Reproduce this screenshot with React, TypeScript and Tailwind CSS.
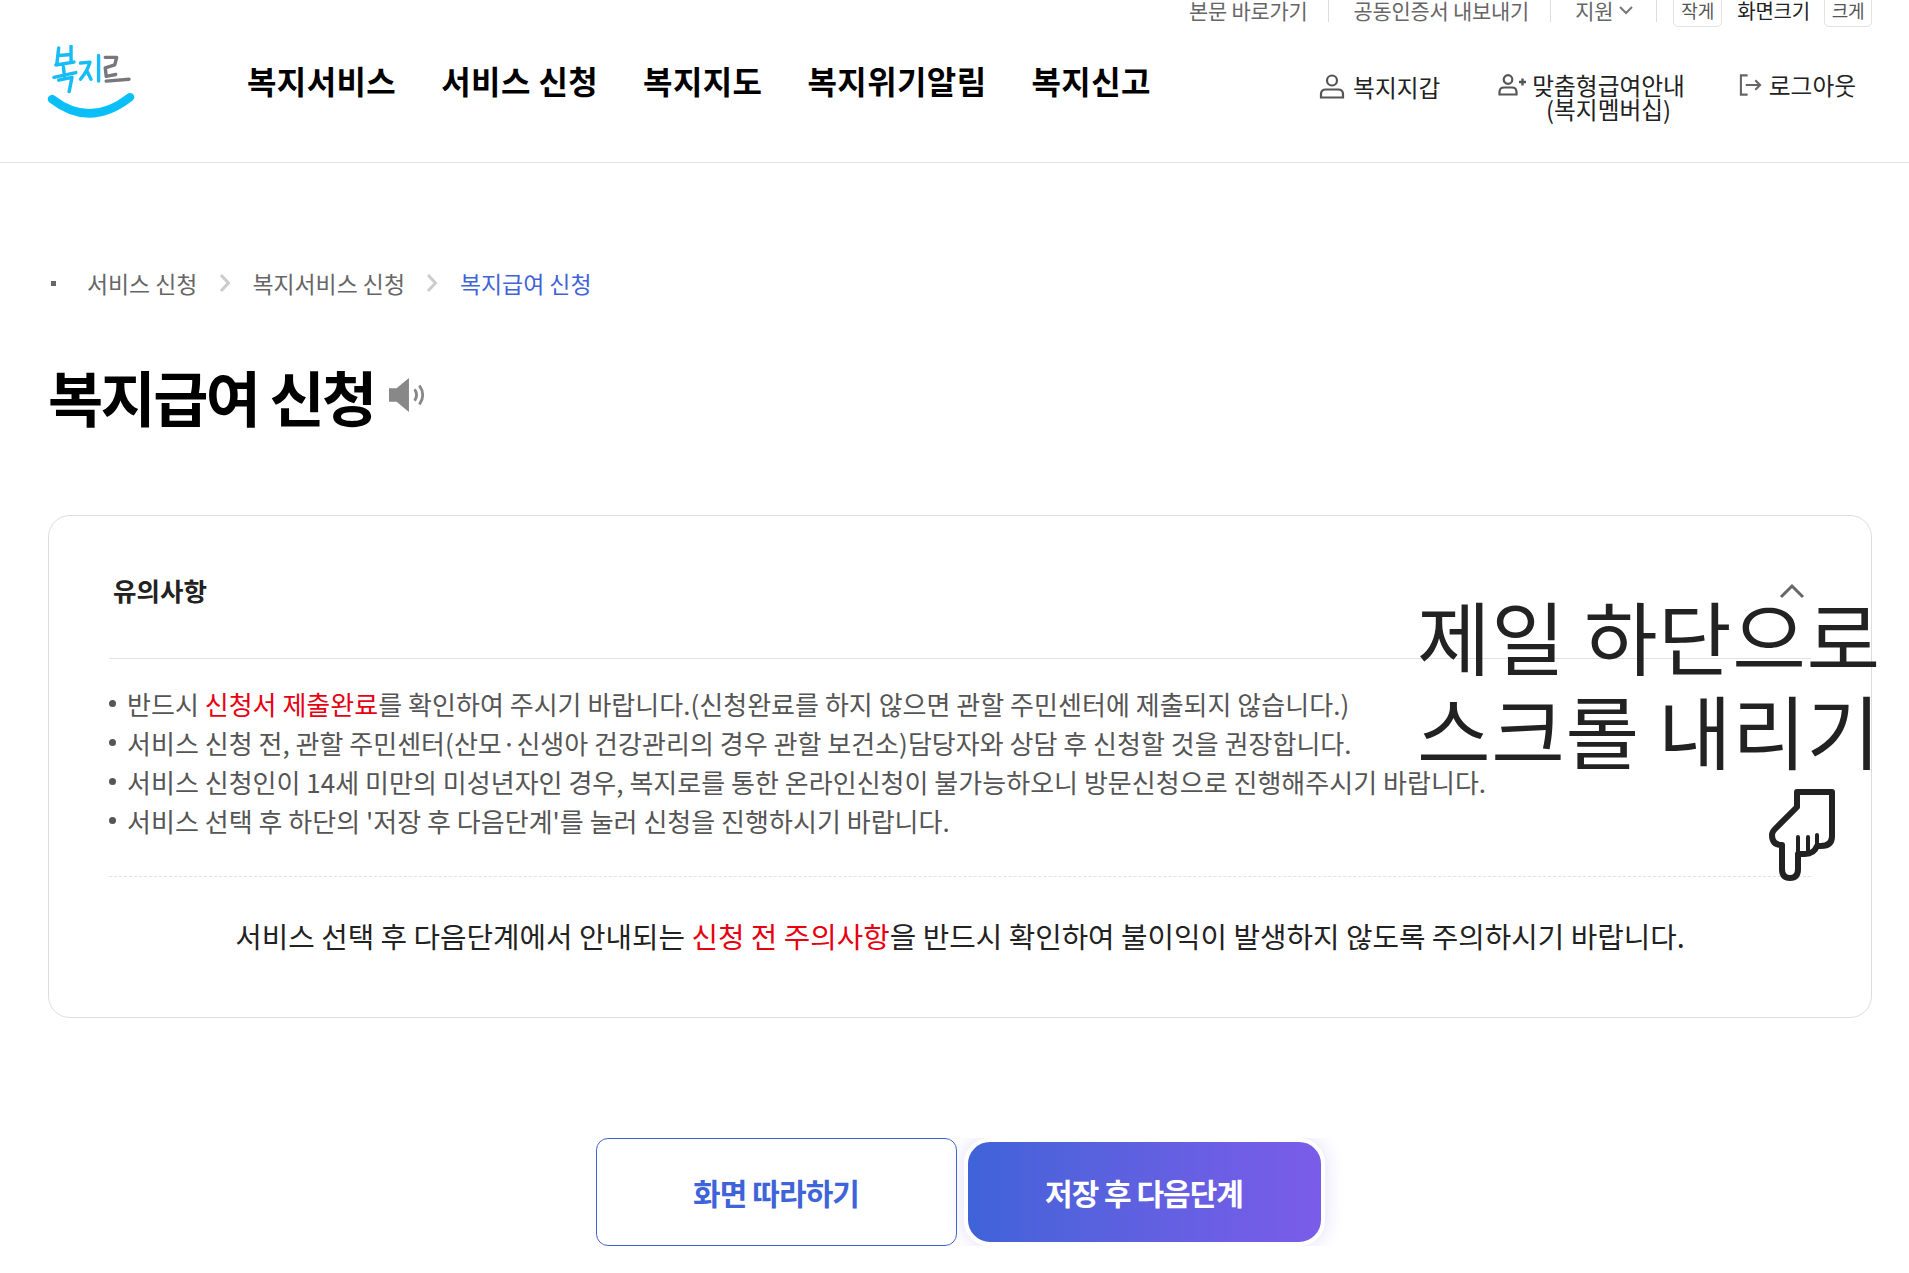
import React from "react";

const font = { fontFamily: '"Noto Sans CJK KR", "Noto Sans", sans-serif' };

function Logo() {
  return (
    <svg width="88" height="76" viewBox="0 0 92 80" fill="none" strokeLinecap="round" strokeLinejoin="round">
      <g stroke="#16bdf4" strokeWidth="3.6">
        <path d="M12 3 L10 20 M25 1 L25 18 M12 11 L25 10 M9 21 L28 18 M7 34 L30 29 M17 23 L18 33 M12 37 L26 34 L23 49" />
        <path d="M35 19 L45 18 Q42 28 35 36 M42 28 L46 36 M54 11 L54 38" />
      </g>
      <path d="M61 13 L73 13 L71 21 L61 24 L62 33 L72 31 M62 38 L86 36" stroke="#77777d" strokeWidth="3.6" />
      <path d="M5 57 Q45 88 87 55" stroke="#08bff8" strokeWidth="9" />
    </svg>
  );
}

function PersonIcon() {
  return (
    <svg width="26" height="25" viewBox="0 0 26 25" fill="none" stroke="#555" strokeWidth="2.2">
      <circle cx="13" cy="6.5" r="5" />
      <path d="M2 23.5 V20 Q2 15.5 7 15.5 H19 Q24 15.5 24 20 V23.5 Z" />
    </svg>
  );
}

function PersonPlusIcon() {
  return (
    <svg width="28" height="22" viewBox="0 0 28 22" fill="none" stroke="#555" strokeWidth="2.2">
      <circle cx="10" cy="5.5" r="4.3" />
      <path d="M1.5 20.5 V18 Q1.5 13.5 6 13.5 H14 Q18.5 13.5 18.5 18 V20.5 Z" />
      <path d="M21 8 H28 M24.5 4.5 V11.5" strokeWidth="2.4" />
    </svg>
  );
}

function LogoutIcon() {
  return (
    <svg width="23" height="24" viewBox="0 0 24 24" fill="none" stroke="#666" strokeWidth="2.2">
      <path d="M9 2 H2 V22 H9 M7 12 H22 M17 7 L22 12 L17 17" />
    </svg>
  );
}

function Sep() {
  return <span className="block w-px h-[22px] bg-[#dddddd]" />;
}

function Crumb() {
  return (
    <svg width="12" height="20" viewBox="0 0 12 20" fill="none" stroke="#cccccc" strokeWidth="3">
      <path d="M2 2 L9.5 10 L2 18" />
    </svg>
  );
}

function Hand() {
  return (
    <svg width="66" height="92" viewBox="0 0 66 92" fill="none" stroke="#222" strokeWidth="6" strokeLinejoin="round" strokeLinecap="round">
      <path d="M28 3 H63 V47 Q63 57 52 57 H48 Q45 65 36 65 H29 V80 Q29 89 21 89 Q13 89 13 80 V56 Q3 56 3 46 Q3 43 6 40 L28 18 Z" />
      <path d="M29 48 V64 M39 48 V64 M48 46 V57" strokeWidth="4" />
    </svg>
  );
}

const menus = ["복지서비스", "서비스 신청", "복지지도", "복지위기알림", "복지신고"];

const notices: React.ReactNode[] = [
  <>반드시 <span className="text-[#e60012]">신청서 제출완료</span>를 확인하여 주시기 바랍니다.(신청완료를 하지 않으면 관할 주민센터에 제출되지 않습니다.)</>,
  <>서비스 신청 전, 관할 주민센터(산모·신생아 건강관리의 경우 관할 보건소)담당자와 상담 후 신청할 것을 권장합니다.</>,
  <>서비스 신청인이 14세 미만의 미성년자인 경우, 복지로를 통한 온라인신청이 불가능하오니 방문신청으로 진행해주시기 바랍니다.</>,
  <>서비스 선택 후 하단의 '저장 후 다음단계'를 눌러 신청을 진행하시기 바랍니다.</>,
];

export default function App() {
  return (
    <div className="relative w-[1909px] h-[1273px] overflow-hidden bg-white" style={font}>
      <header className="h-[163px] border-b border-[#e2e2e2]">
        <div className="h-[27px] flex justify-end items-center pr-[37px] text-[20.9px] tracking-[-0.2px] text-[#666]">
          <span className="-mt-[6px]">본문 바로가기</span>
          <span className="ml-[21px] -mt-[6px]"><Sep /></span>
          <span className="ml-[24px] -mt-[6px]">공동인증서 내보내기</span>
          <span className="ml-[21px] -mt-[6px]"><Sep /></span>
          <span className="ml-[24px] -mt-[6px] flex items-center gap-[6px]">지원
            <svg width="14" height="9" viewBox="0 0 14 9" fill="none" stroke="#777" strokeWidth="2"><path d="M1 1 L7 7 L13 1" /></svg>
          </span>
          <span className="ml-[23px] -mt-[6px]"><Sep /></span>
          <span className="ml-[16px] self-end h-[40px] w-[49px] flex items-end justify-center pb-[4px] border border-[#e2e2e2] rounded-[5px] text-[18px] text-[#555] leading-[24px]">작게</span>
          <span className="ml-[15px] -mt-[6px] text-[#222] text-[20px]">화면크기</span>
          <span className="ml-[14px] self-end h-[40px] w-[48px] flex items-end justify-center pb-[4px] border border-[#e2e2e2] rounded-[5px] text-[18px] text-[#555] leading-[24px]">크게</span>
        </div>
        <div className="h-[135px] flex items-start">
          <div className="ml-[47px] mt-[18px] w-[200px] shrink-0"><Logo /></div>
          <nav className="mt-[31px] flex gap-[45px] text-[32px] leading-[44px] font-bold text-black tracking-[0.4px]">
            {menus.map((m) => <span key={m}>{m}</span>)}
          </nav>
          <div className="ml-auto mr-[53px] mt-[46px] flex items-start text-[23.7px] leading-[24px] text-[#222]">
            <span className="flex items-center gap-[8px] mt-[1px]"><PersonIcon />복지지갑</span>
            <span className="ml-[58px] flex items-start gap-[6px]">
              <span className="mt-[1px]"><PersonPlusIcon /></span>
              <span className="text-center">맞춤형급여안내<br />(복지멤버십)</span>
            </span>
            <span className="ml-[54px] flex items-center gap-[7px]"><LogoutIcon />로그아웃</span>
          </div>
        </div>
      </header>

      <main className="pl-[48px] pr-[37px]">
        <div className="mt-[102px] flex items-center text-[22.9px] leading-[36px] text-[#666]">
          <span className="block w-[5px] h-[5px] bg-[#666] ml-[3px] mr-[31px]" />
          <span>서비스 신청</span>
          <span className="mx-[21.5px]"><Crumb /></span>
          <span>복지서비스 신청</span>
          <span className="mx-[21.5px]"><Crumb /></span>
          <span className="text-[#3f63d8]">복지급여 신청</span>
        </div>

        <div className="mt-[52px] h-[86px] flex items-center">
          <h1 className="text-[60px] font-bold leading-[86px] text-black tracking-[-2.6px]">복지급여 신청</h1>
          <svg className="ml-[13px] -mt-[3px]" width="40" height="38" viewBox="0 0 42 40" fill="none">
            <path d="M1 13 H9 L22 2 V38 L9 27 H1 Z" fill="#888" />
            <path d="M28 14 Q32 20 28 26 M33 10 Q40 20 33 30" stroke="#888" strokeWidth="3" />
          </svg>
        </div>

        <section className="mt-[76px] h-[503px] border border-[#dddddd] rounded-[22px] pl-[60px] pr-[60px]">
          <div className="h-[143px] border-b border-[#e2e2e2] pt-[50px] flex justify-between">
            <h2 className="text-[25.5px] leading-[48px] font-bold text-[#222] pl-[4px]">유의사항</h2>
            <svg className="mr-[6px] mt-[17px]" width="26" height="16" viewBox="0 0 26 16" fill="none" stroke="#666" strokeWidth="3"><path d="M2 14 L13 3 L24 14" /></svg>
          </div>
          <ul className="pt-[25px] border-b border-dashed border-[#e2e2e2] h-[218px] text-[26px] leading-[39px] tracking-[0.03px] text-[#555]">
            {notices.map((n, i) => (
              <li key={i} className="flex items-center">
                <span className="block w-[7px] h-[7px] rounded-full bg-[#555] mr-[11px] shrink-0" />
                <span>{n}</span>
              </li>
            ))}
          </ul>
          <p className="pt-[38px] text-center text-[28.8px] leading-[42px] text-[#222]">
            서비스 선택 후 다음단계에서 안내되는 <span className="text-[#e60012]">신청 전 주의사항</span>을 반드시 확인하여 불이익이 발생하지 않도록 주의하시기 바랍니다.
          </p>
        </section>

        <div className="mt-[120px] h-[108px] flex justify-center gap-[7px] overflow-hidden">
          <button className="w-[361px] h-[108px] border border-[#3f63d8] rounded-[12px] bg-white text-[#3f63d8] text-[30px] tracking-[-0.9px] font-bold">화면 따라하기</button>
          <button className="w-[361px] h-[108px] border-[4px] border-white rounded-[26px] bg-gradient-to-r from-[#3f63d8] to-[#7a5ce9] text-white text-[30px] tracking-[-1px] font-bold shadow-[0_0_20px_rgba(100,80,220,0.2)]">저장 후 다음단계</button>
        </div>
      </main>

      <div className="absolute left-[1417px] top-[587px] w-[470px] text-[80px] leading-[94px] text-[#222] tracking-[0.6px] whitespace-nowrap">
        제일 하단으로<br />스크롤 내리기
      </div>
      <div className="absolute left-[1769px] top-[789px]"><Hand /></div>
    </div>
  );
}
